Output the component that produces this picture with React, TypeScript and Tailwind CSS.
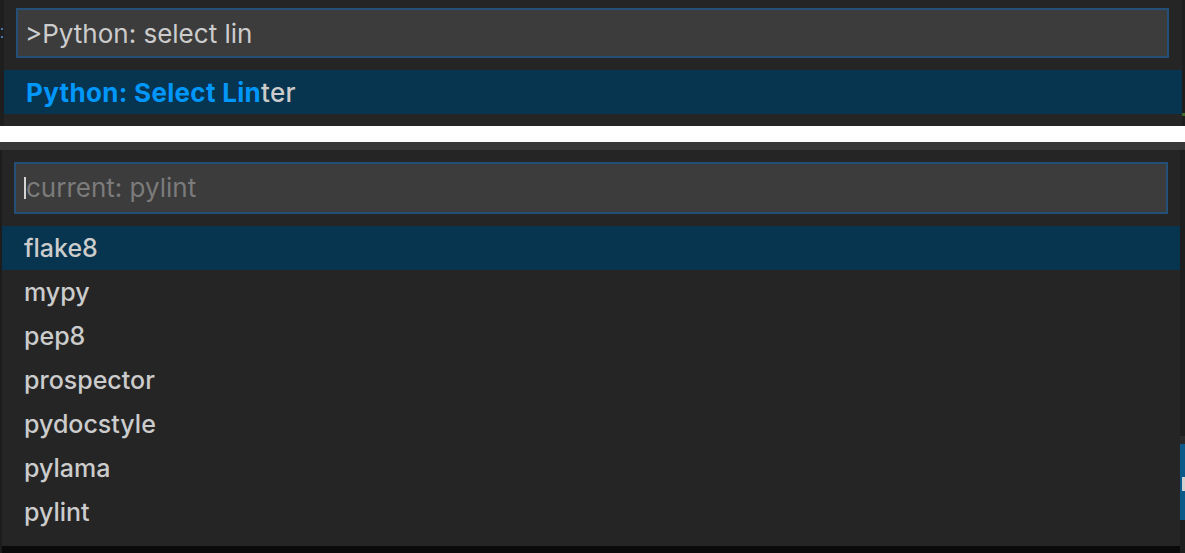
const linters = ["flake8", "mypy", "pep8", "prospector", "pydocstyle", "pylama", "pylint"];

const font = { fontFamily: "Inter, 'Noto Sans', sans-serif" };

export default function App() {
  return (
    <div className="w-[1185px] h-[553px] bg-white flex flex-col overflow-hidden" style={font}>
      {/* top quick pick */}
      <div className="h-[126px] flex flex-row bg-[#252526]">
        <div className="w-[4px] bg-[#1e1e1e] flex flex-col pt-[28px] gap-[6px]">
          <div className="w-[2px] h-[2px] bg-[#4a7bb0] ml-[1px]" />
          <div className="w-[2px] h-[2px] bg-[#4a7bb0] ml-[1px]" />
        </div>
        <div className="flex-1 flex flex-col pt-[8px]">
          <div className="ml-[12px] w-[1153px] h-[50px] bg-[#3c3c3c] border-2 border-[#245078] flex items-center pl-[7px] pt-[2px]">
            <span className="text-[26px] text-[#cccccc] leading-none">&gt;Python: select lin</span>
          </div>
          <div className="mt-[12px] h-[44px] bg-[#07344f] flex items-center pl-[22px] pt-[2px]">
            <span className="text-[26px] leading-none tracking-[0.3px]">
              <span className="text-[#0097fb] font-bold">Python: Select Lin</span>
              <span className="text-[#cccccc] font-medium">ter</span>
            </span>
          </div>
        </div>
        <div className="w-[3px] bg-[#1e1e1e] flex flex-col pt-[113px]">
          <div className="h-[3px] bg-[#3e6b2c]" />
        </div>
      </div>

      {/* separator */}
      <div className="h-[16px] bg-white" />

      {/* bottom quick pick */}
      <div className="flex-1 flex flex-col bg-[#1e1e1e]">
        <div className="h-[8px] bg-[#383838]" />
        <div className="flex-1 flex flex-row">
          <div className="w-[2px] bg-[#1c1c1c]" />
          <div className="w-[1178px] flex flex-col">
            <div className="h-[396px] bg-[#252526] flex flex-col pt-[12px]">
              <div className="ml-[12px] w-[1154px] h-[52px] bg-[#3c3c3c] border-2 border-[#245078] flex items-center pl-[8px]">
                <div className="w-[2px] h-[22px] bg-[#d4d4d4]" />
                <span className="text-[26px] text-[#7b7b7b] leading-none">current: pylint</span>
              </div>
              <div className="mt-[12px] flex flex-col">
                {linters.map((name, i) => (
                  <div
                    key={name}
                    className={i === 0 ? "h-[44px] bg-[#07344f] flex items-center pl-[22px]" : "h-[44px] flex items-center pl-[22px]"}
                  >
                    <span className="text-[25px] text-[#cccccc] font-medium leading-none">{name}</span>
                  </div>
                ))}
              </div>
            </div>
            <div className="flex-1 bg-[#0a0a0a]" />
          </div>
          <div className="flex-1 flex flex-col bg-[#1e1e1e]">
            <div className="h-[286px] bg-[#1e1e1e]" />
            <div className="h-[8px] bg-[#2a2a2a]" />
            <div className="h-[76px] bg-[#0b5a8a] flex flex-col pt-[33px] items-end">
              <div className="w-[3px] h-[14px] bg-[#d0d0d0]" />
            </div>
          </div>
        </div>
      </div>
    </div>
  );
}
